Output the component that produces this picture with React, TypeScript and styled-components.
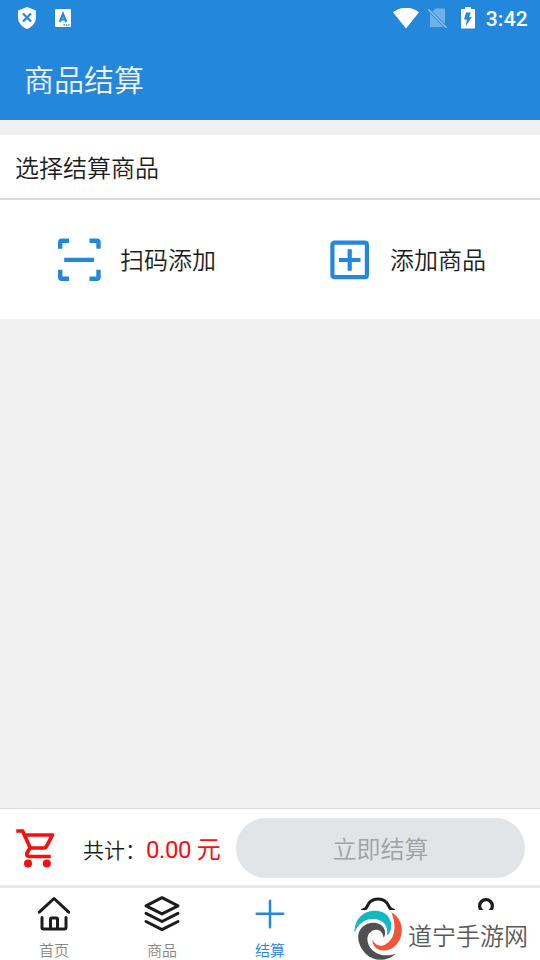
import React from "react";
import styled, { createGlobalStyle } from "styled-components";

const BLUE = "#2388dc";
const INK = "#1c1c1c";

const GlobalStyle = createGlobalStyle`
  * { box-sizing: border-box; }
  body {
    margin: 0;
    background: #f1f1f1;
    font-family: "Noto Sans CJK SC", sans-serif;
    font-weight: 350;
    color: ${INK};
  }
  svg { display: block; flex: none; }
`;

const Screen = styled.div`
  width: 540px;
  height: 960px;
  display: flex;
  flex-direction: column;
  overflow: hidden;
`;

const Header = styled.header`
  height: 120px;
  background: ${BLUE};
  flex: none;
`;

const StatusBar = styled.div`
  height: 36px;
  display: flex;
  align-items: center;
  justify-content: space-between;
  padding: 0 12px 0 17px;
`;

const StatusGroup = styled.div<{ $gap: number }>`
  display: flex;
  align-items: center;
  gap: ${(p) => p.$gap}px;
`;

const Clock = styled.span`
  font: 500 21px/36px Roboto, sans-serif;
  letter-spacing: 0.25px;
  color: #fff;
  padding-top: 2px;
`;

const Title = styled.h1`
  margin: 0;
  padding: 0 24px;
  font-size: 30px;
  line-height: 84px;
  font-weight: inherit;
  color: #f1f1f1;
`;

const Card = styled.section`
  margin-top: 15px;
  height: 184px;
  background: #fff;
  flex: none;
`;

const CardTitle = styled.h2`
  margin: 0;
  height: 65px;
  padding-left: 15px;
  font-size: 24px;
  line-height: 63px;
  font-weight: inherit;
  border-bottom: 2px solid #dadbe0;
`;

const Actions = styled.div`
  height: 119px;
  display: grid;
  grid-template-columns: 1fr 1fr;
`;

const Action = styled.button`
  display: flex;
  align-items: center;
  gap: 17px;
  border: 0;
  padding: 0 0 0 55px;
  background: none;
  color: inherit;
  font: inherit;
  font-size: 24px;
`;

const ActionLabel = styled.span`
  padding-bottom: 2px;
`;

const Spacer = styled.main`
  flex: 1;
`;

const Checkout = styled.section`
  height: 77px;
  flex: none;
  display: flex;
  align-items: center;
  background: #fff;
  border-top: 1px solid #d9dadb;
  padding: 1px 15px 0 16px;
`;

const Total = styled.div`
  flex: 1;
  display: flex;
  align-items: baseline;
  padding: 0 0 0 27px;
  font-size: 21px;
  white-space: nowrap;
`;

const Amount = styled.strong`
  font-size: 24px;
  font-weight: 400;
  letter-spacing: -0.4px;
  color: #fb0d0d;
  font-family: Roboto, "Noto Sans CJK SC", sans-serif;
`;

const PayButton = styled.button`
  width: 289px;
  height: 60px;
  border: 0;
  border-radius: 30px;
  background: #e2e5e8;
  color: #a0a1a3;
  font: inherit;
  font-size: 24px;
`;

const TabBar = styled.nav`
  position: relative;
  height: 75px;
  flex: none;
  display: grid;
  grid-template-columns: repeat(5, 1fr);
  background: #fff;
  border-top: 3px solid #e6eaec;
`;

const Tab = styled.a<{ $active?: boolean }>`
  display: flex;
  flex-direction: column;
  align-items: center;
  padding-top: 6px;
  color: ${(p) => (p.$active ? BLUE : "#888")};
  font-size: 15px;
  line-height: 22px;
  gap: 5px;
`;

const Watermark = styled.div`
  position: absolute;
  right: 0;
  bottom: 0;
  width: 190px;
  height: 50px;
  display: flex;
  align-items: center;
  gap: 4px;
  padding-left: 4px;
  background: #fff;
  color: #5a5a5a;
  font-size: 24px;
  line-height: 50px;
  white-space: nowrap;
`;

const ShieldIcon = () => (
  <svg width="20" height="24" viewBox="0 0 20 24">
    <path d="M10 1 19 4.600V11c0 5.400-3.600 10.100-9 12-5.400-1.900-9-6.600-9-12V4.600Z" fill="#fff" />
    <path d="m6 7.500 8 8m0-8-8 8" stroke={BLUE} strokeWidth="2.300" />
  </svg>
);

const InputIcon = () => (
  <svg width="16" height="18" viewBox="0 0 16 18">
    <rect width="16" height="18" rx="1.200" fill="#fff" />
    <path d="M4.800 13 8 5l3.200 8M5.600 10.500h4.800" fill="none" stroke={BLUE} strokeWidth="2.200" />
    <path d="M8.500 16h6" stroke={BLUE} strokeWidth="1.300" strokeDasharray="1.400 1" />
  </svg>
);

const WifiIcon = () => (
  <svg width="26" height="21" viewBox="0 0 26 21">
    <path d="M0 4.200C7.500-1.700 18.500-1.700 26 4.200L13 20.400Z" fill="#fff" />
  </svg>
);

const NoSimIcon = () => (
  <svg width="22" height="22" viewBox="2 0 22 22">
    <path d="M7.500 1.500H17v15.500L4.500 4.500ZM2 6.500 15.500 20H2Z" fill="#fff" opacity=".35" />
    <path d="M.200 2.300 18.700 21" stroke="#fff" strokeWidth="1.700" opacity=".45" />
  </svg>
);

const SimSlot = styled.span`
  margin-right: -2px;
  svg { overflow: visible; }
`;

const BatteryIcon = () => (
  <svg width="14" height="22" viewBox="0 0 14 22">
    <path d="M4 0h6v2h4v19.500H0V2h4Z" fill="#fff" />
    <path d="M5 5.500h5L8 10h2.800L5 19l.800-6.500H3Z" fill={BLUE} />
  </svg>
);

const ScanIcon = () => (
  <svg width="48" height="48" viewBox="0 .7 48 48" fill="none" stroke={BLUE} strokeWidth="4.400">
    <path d="M5.200 13.500V7q0-1.500 1.500-1.500H14M34.500 5.500H42q1.500 0 1.500 1.500v6.500M5.200 34.500V42q0 1.500 1.500 1.500H14M34.500 43.500H42q1.500 0 1.500-1.500v-7.500M9.200 24.600h29.800" />
  </svg>
);

const AddBoxIcon = () => (
  <svg width="48" height="48" viewBox="0 0 48 48" fill="none" stroke={BLUE} strokeWidth="4.200">
    <rect x="7.400" y="6.700" width="34.500" height="34.500" rx="2" />
    <path d="M14 24h21.500M24.700 13.200v21.500" />
  </svg>
);

const CartIcon = () => (
  <svg width="40" height="40" viewBox="0 0 40 40" fill="none" stroke="#fb0d0d" strokeWidth="3.700" strokeLinejoin="round">
    <path d="M.3 3h6.300l7.700 17h13.700q1.500 0 2.200-1.200L36.500 7H9M14.300 19.500 11 25q-1.200 3 2 3.500H34.800" />
    <circle cx="12" cy="35.500" r="4" fill="#fb0d0d" stroke="none" />
    <circle cx="30.800" cy="35.500" r="4" fill="#fb0d0d" stroke="none" />
  </svg>
);

const lineProps = {
  width: 40,
  height: 40,
  viewBox: "0 0 40 40",
  fill: "none",
  stroke: INK,
  strokeWidth: 3,
  strokeLinecap: "round" as const,
  strokeLinejoin: "round" as const,
};

const HomeIcon = () => (
  <svg {...lineProps}>
    <path d="M5.300 18.200 20 4.500l14.700 13.700M8 23.500v10q0 1.500 1.500 1.500h21q1.500 0 1.500-1.500v-10M16.500 34.500V25q0-1 1-1h5q1 0 1 1v9.500" />
  </svg>
);

const LayersIcon = () => (
  <svg {...lineProps}>
    <path d="M20 3.700 36 11.800 20 19.900 4 11.800ZM4 19.400 20 27.500l16-8.100M4 27.500 20 35.600l16-8.100" />
  </svg>
);

const PlusIcon = () => (
  <svg {...lineProps} stroke={BLUE} strokeWidth={2.5}>
    <path d="M20 6.700v26.600M6.700 19.700h26.600" />
  </svg>
);

const BellIcon = () => (
  <svg {...lineProps}>
    <path d="M4.500 16Q8 15.500 9 12.500C11 7 15 4.900 20 4.900S29 7 31 12.500Q32 15.500 35.500 16" />
  </svg>
);

const UserIcon = () => (
  <svg {...lineProps} strokeWidth={3.3}>
    <circle cx="20" cy="12" r="6.400" />
  </svg>
);

const SwirlLogo = () => (
  <svg width="50" height="50" viewBox="12 50 150 150">
    <path d="M14 118C12 84 34 52 76 52c34 0 53 28 47 56q-3 13-13 19c5-20-2-38-21-46-24-10-61-3-75 37Z" fill="#12b8c4" />
    <path d="M124 57c27 14 37 45 29 72-8 28-33 46-57 42-20-3-29-17-29-32 8 16 23 22 38 15 29-14 37-53 19-97Z" fill="#f05537" />
    <path d="M137 181c-24 24-66 25-90 0-25-26-31-62-9-81 21-18 57-16 66 10 3 9 1 17-3 23-2-18-15-27-28-23-20 6-26 27-16 47 13 24 43 36 80 24Z" fill="#505052" />
    <path d="M67 136c-4-17 7-29 23-23-12 3-14 13-8 25q-8 6-15-2Z" fill="#fff" />
  </svg>
);

export default function App() {
  return (
    <>
      <GlobalStyle />
      <Screen>
        <Header>
          <StatusBar>
            <StatusGroup $gap={18}>
              <ShieldIcon />
              <InputIcon />
            </StatusGroup>
            <StatusGroup $gap={11}>
              <WifiIcon />
              <SimSlot><NoSimIcon /></SimSlot>
              <BatteryIcon />
              <Clock>3:42</Clock>
            </StatusGroup>
          </StatusBar>
          <Title>商品结算</Title>
        </Header>
        <Card>
          <CardTitle>选择结算商品</CardTitle>
          <Actions>
            <Action><ScanIcon /><ActionLabel>扫码添加</ActionLabel></Action>
            <Action><AddBoxIcon /><ActionLabel>添加商品</ActionLabel></Action>
          </Actions>
        </Card>
        <Spacer />
        <Checkout>
          <CartIcon />
          <Total>共计：<Amount>0.00 元</Amount></Total>
          <PayButton>立即结算</PayButton>
        </Checkout>
        <TabBar>
          <Tab><HomeIcon />首页</Tab>
          <Tab><LayersIcon />商品</Tab>
          <Tab $active><PlusIcon />结算</Tab>
          <Tab><BellIcon /></Tab>
          <Tab><UserIcon /></Tab>
          <Watermark><SwirlLogo />道宁手游网</Watermark>
        </TabBar>
      </Screen>
    </>
  );
}
